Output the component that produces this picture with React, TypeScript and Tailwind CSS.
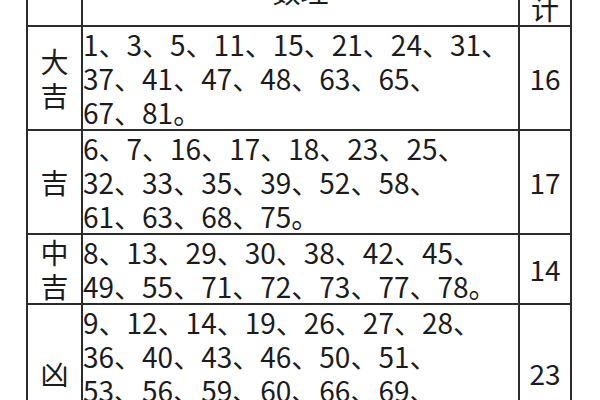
const rows = [
  {
    label: ['大', '吉'],
    lines: ['1、3、5、11、15、21、24、31、', '37、41、47、48、63、65、', '67、81。'],
    count: 16,
  },
  {
    label: ['吉'],
    lines: ['6、7、16、17、18、23、25、', '32、33、35、39、52、58、', '61、63、68、75。'],
    count: 17,
  },
  {
    label: ['中', '吉'],
    lines: ['8、13、29、30、38、42、45、', '49、55、71、72、73、77、78。'],
    count: 14,
  },
  {
    label: ['凶'],
    lines: ['9、12、14、19、26、27、28、', '36、40、43、46、50、51、', '53、56、59、60、66、69、', '70、72、74、76。'],
    count: 23,
  },
]

export default function App() {
  return (
    <div
      className="w-[600px] h-[400px] overflow-hidden bg-white text-[#1c1c1c]"
      style={{ fontFamily: '"Noto Sans CJK SC", "Noto Sans", sans-serif' }}
    >
      <div className="ml-[26px] -mt-[45px] w-[546px] grid grid-cols-[53px_435px_50px] gap-[2px] p-[2px] bg-[#2b2b2b]">
        {/* Header */}
        <div className="bg-white" />
        <div className="bg-white flex items-center justify-center text-[28px] leading-[34px]">数理</div>
        <div className="bg-white flex flex-col items-center text-[28px] leading-[34px]">
          <span>统</span>
          <span>计</span>
        </div>

        {rows.map((r) => (
          <>
            <div key={r.label.join('') + 'l'} className="bg-white flex flex-col items-center justify-center text-[28px] leading-[34px]">
              {r.label.map((c, i) => (
                <span key={i}>{c}</span>
              ))}
            </div>
            <div key={r.label.join('') + 'm'} className="bg-white text-[28px] leading-[34px] overflow-hidden">
              {r.lines.map((l, i) => (
                <div key={i} className="whitespace-nowrap">{l}</div>
              ))}
            </div>
            <div key={r.label.join('') + 'c'} className="bg-white flex items-center justify-center text-[28px] leading-[34px]">
              {r.count}
            </div>
          </>
        ))}
      </div>
    </div>
  )
}
